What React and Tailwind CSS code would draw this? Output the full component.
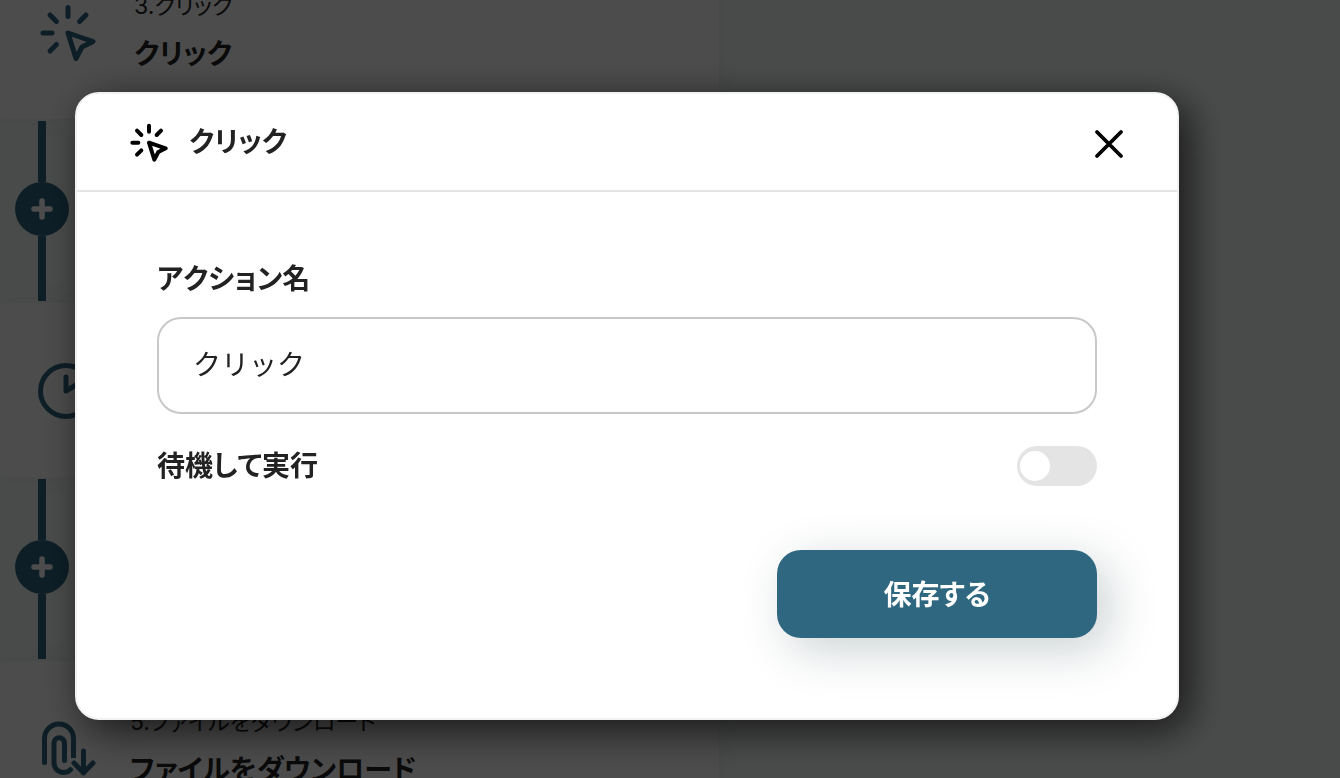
import React, { useState } from 'react';

const ClickIcon = ({ className, strokeWidth = 5 }) => (
  <svg
    viewBox="0 0 60 60"
    className={className}
    fill="none"
    stroke="currentColor"
    strokeWidth={strokeWidth}
    strokeLinecap="round"
    strokeLinejoin="round"
    aria-hidden="true"
  >
    <path d="M30 5.500v9M12 13l6.500 6.500M48 13l-6.500 6.500M5 31h9M18.500 42.500 12 49" />
    <path d="M30 31l25 8.500-11 5.500-6 11.500z" />
  </svg>
);

const ClockIcon = ({ className }) => (
  <svg
    viewBox="0 0 56 56"
    className={className}
    fill="none"
    stroke="currentColor"
    strokeWidth="5"
    strokeLinecap="round"
    strokeLinejoin="round"
    overflow="visible"
    aria-hidden="true"
  >
    <circle cx="28" cy="29" r="25.500" />
    <path d="M28 15v14l10-6" />
  </svg>
);

const DownloadFileIcon = ({ className }) => (
  <svg
    viewBox="0 0 56 56"
    className={className}
    fill="none"
    stroke="currentColor"
    strokeWidth="5"
    strokeLinejoin="round"
    overflow="visible"
    aria-hidden="true"
  >
    <path d="M35.500 38V18.500a14.500 14.500 0 0 0-29 0v24" />
    <circle cx="6.500" cy="42.500" r="2.500" fill="currentColor" stroke="none" />
    <g strokeLinecap="round">
      <path d="M26.500 40.500V23a5.250 5.250 0 0 0-10.500 0v19.500c0 6 4.500 10 9.500 10 3 0 5.500-1 7-2.800" />
      <path d="M45.500 31v22M36 43l9.500 9.800 9.500-9.800" />
    </g>
  </svg>
);

const StepCard = ({ icon, label, title }) => (
  <li className="flex h-[174px] w-full max-w-[733px] items-center gap-9 rounded-3xl bg-white pl-[52px] shadow-[0_0_24px_rgba(0,0,0,0.05)]">
    <span className="shrink-0 text-[#2f6780]">{icon}</span>
    {title && (
      <div className="text-[#222]">
        <p className="font-[Inter,'Noto_Sans_CJK_JP',sans-serif] text-[23px] leading-8">{label}</p>
        <h3 className="mt-2 text-[28px] leading-[44px] font-bold">{title}</h3>
      </div>
    )}
  </li>
);

const Connector = () => (
  <li className="my-0.5 ml-[29px] flex h-[180px] w-[54px] flex-col items-center">
    <span className="h-[61px] w-2 bg-[#2f6780]" />
    <button
      type="button"
      aria-label="アクションを追加"
      className="flex size-[54px] items-center justify-center rounded-full bg-[#2f6780] text-white"
    >
      <svg viewBox="0 0 22 22" className="size-[22px]" stroke="currentColor" strokeWidth="5.500" strokeLinecap="round" aria-hidden="true">
        <path d="M11 3v16M3 11h16" />
      </svg>
    </button>
    <span className="w-2 flex-1 bg-[#2f6780]" />
  </li>
);

const ActionDialog = () => {
  const [name, setName] = useState('クリック');
  const [wait, setWait] = useState(false);

  const handleSubmit = (e) => {
    e.preventDefault();
  };

  return (
    <div
      role="dialog"
      aria-modal="true"
      aria-labelledby="dialog-title"
      className="w-full rounded-3xl border-2 border-[#f2f2f2] bg-white text-[#222] shadow-[10px_10px_40px_rgba(0,0,0,0.7)]"
    >
      <header className="flex h-[98px] items-center border-b-2 border-[#e4e4e4] pr-[52px] pl-[52px]">
        <ClickIcon className="size-10 text-black" strokeWidth={6} />
        <h2 id="dialog-title" className="mb-1 ml-5 text-[28px] leading-10 font-bold">
          クリック
        </h2>
        <button type="button" aria-label="閉じる" className="mt-1 ml-auto text-black">
          <svg viewBox="0 0 32 32" className="size-8" stroke="currentColor" strokeWidth="3.800" strokeLinecap="round" aria-hidden="true">
            <path d="M4 4l24 24M28 4L4 28" />
          </svg>
        </button>
      </header>

      <form onSubmit={handleSubmit} className="px-20 pt-16 pb-20 [font-kerning:none]">
        <label htmlFor="action-name" className="block text-[28px] leading-[42px] font-bold">
          アクション名
        </label>
        <input
          id="action-name"
          type="text"
          value={name}
          onChange={(e) => setName(e.target.value)}
          className="mt-[19px] block h-[97px] w-full rounded-3xl border-2 border-[#c8c8c8] px-[34px] pb-1.5 text-[28px] [font-feature-settings:normal]"
        />

        <div className="mt-7 flex items-start justify-between">
          <label htmlFor="wait-run" className="text-[28px] leading-[44px] font-bold">
            待機して実行
          </label>
          <input
            id="wait-run"
            type="checkbox"
            role="switch"
            checked={wait}
            onChange={(e) => setWait(e.target.checked)}
            className="mt-1 flex h-10 w-20 cursor-pointer appearance-none items-center rounded-full bg-[#e4e4e4] px-[3px] before:size-[30px] before:rounded-full before:bg-white checked:justify-end checked:bg-[#2f6780]"
          />
        </div>

        <button
          type="submit"
          className="mt-16 ml-auto block h-[88px] w-80 rounded-3xl bg-[#2f6780] pb-0.5 text-[28px] font-bold text-white shadow-[12px_12px_48px_rgba(20,50,60,0.22)]"
        >
          保存する
        </button>
      </form>
    </div>
  );
};

const App = () => {
  return (
    <div className="h-screen overflow-hidden bg-[#f6fcfa] font-['Noto_Sans_CJK_JP',sans-serif] [font-feature-settings:'palt']">
      <ol className="-mt-[55px] -ml-[14px]">
        <StepCard icon={<ClickIcon className="size-[60px]" />} label="3.クリック" title="クリック" />
        <Connector />
        <StepCard icon={<ClockIcon className="size-14" />} />
        <Connector />
        <StepCard
          icon={<DownloadFileIcon className="size-14" />}
          label="5.ファイルをダウンロード"
          title="ファイルをダウンロード"
        />
      </ol>

      <div className="fixed inset-0 overflow-hidden bg-black/70 pt-[92px] pr-[161px] pl-[75px]">
        <ActionDialog />
      </div>
    </div>
  );
};

export default App;
